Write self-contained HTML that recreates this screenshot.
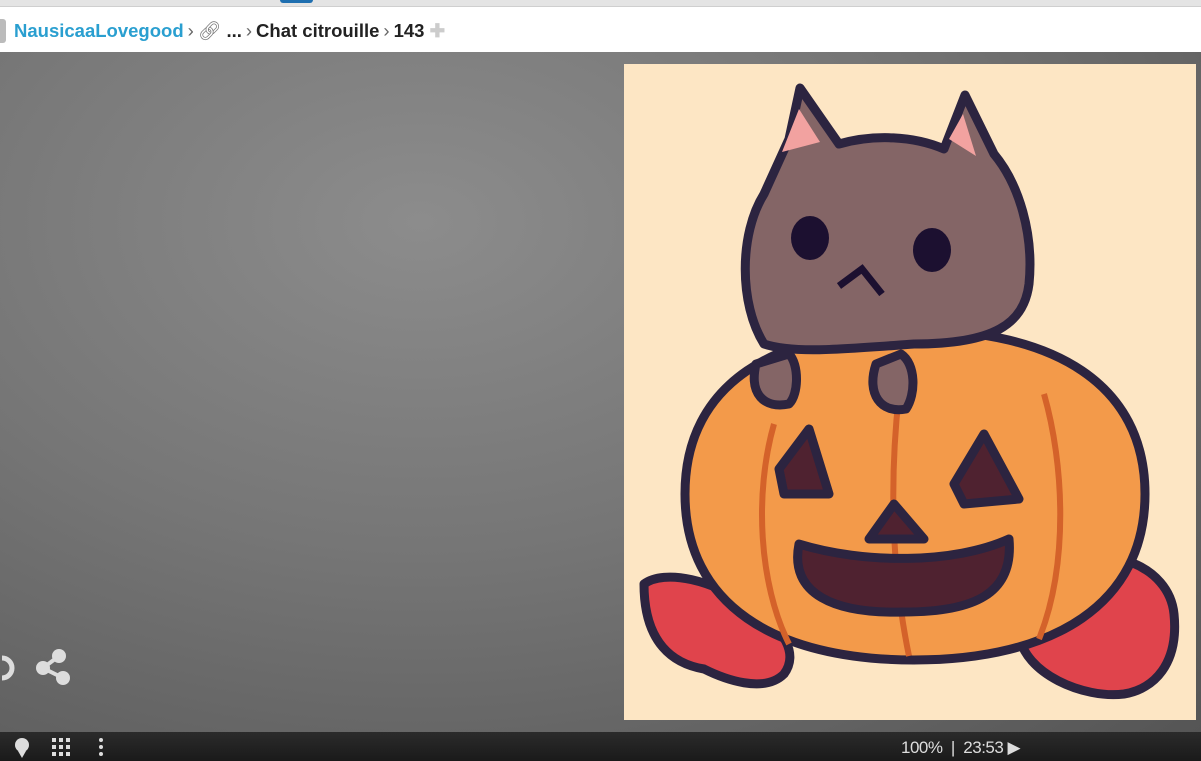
<!DOCTYPE html>
<html><head><meta charset="utf-8"><style>
body{margin:0;width:1201px;height:761px;overflow:hidden;font-family:"Liberation Sans",sans-serif;position:relative;background:#666}
#top{position:absolute;left:0;top:0;width:1201px;height:6px;background:#e4e4e4;border-bottom:1px solid #cfcfcf}
#tab{position:absolute;left:280px;top:0;width:33px;height:3px;background:#1f6fb0;border-radius:0 0 3px 3px}
#bar{position:absolute;left:0;top:7px;width:1201px;height:45px;background:#fff}
#crumb{position:absolute;left:14px;top:20px;font-size:18.5px;font-weight:bold;color:#222;white-space:nowrap}
#crumb .u{color:#2a9fd0}
#crumb .s{color:#666;font-weight:normal;margin:0 4px}
#main{position:absolute;left:0;top:52px;width:1201px;height:680px;background:radial-gradient(ellipse at 35% 25%,#8c8c8c 0%,#767676 45%,#555 100%)}
#img{position:absolute;left:624px;top:64px;width:572px;height:656px;background:#fde6c4}
#bot{position:absolute;left:0;top:732px;width:1201px;height:29px;background:linear-gradient(#2b2b2b,#1a1a1a)}
#stat{position:absolute;left:901px;top:738px;color:#ddd;font-size:17px;letter-spacing:-0.5px}
</style></head><body>
<div id="top"><div id="tab"></div></div>
<div id="bar"></div>
<div style="position:absolute;left:0;top:19px;width:6px;height:24px;background:#bbb;border-radius:0 3px 3px 0"></div>
<div id="crumb"><span class="u">NausicaaLovegood</span><span class="s">›</span><span style="color:#777;font-weight:normal">🔗︎</span> ...<span class="s">›</span>Chat citrouille<span class="s">›</span>143 <span style="color:#ccc">✚</span></div>
<div id="main"></div>
<svg style="position:absolute;left:0;top:648px" width="80" height="40">
<path d="M2 10 A9 9 0 1 1 2 30" fill="none" stroke="#ddd" stroke-width="5"/>
<circle cx="59" cy="8" r="7" fill="#ddd"/><circle cx="43" cy="20" r="7" fill="#ddd"/><circle cx="63" cy="30" r="7" fill="#ddd"/>
<path d="M59 8 L43 20 L63 30" stroke="#ddd" stroke-width="4" fill="none"/>
</svg>
<div id="img">
<svg width="572" height="656" viewBox="0 0 572 656">
<g stroke="#2c2440" stroke-width="9" stroke-linejoin="round">
<path d="M20 520 C40 505 90 515 130 545 C160 565 175 590 160 610 C140 630 100 615 80 605 C50 600 20 580 20 520Z" fill="#e0444c"/>
<path d="M440 500 C480 480 545 500 550 550 C555 600 530 625 500 630 C460 635 400 610 395 570 C395 540 410 515 440 500Z" fill="#e0444c"/>
<path d="M290 266 C150 266 61 320 61 430 C61 540 150 596 290 596 C430 596 521 540 521 430 C521 320 430 266 290 266Z" fill="#f39a4a"/>
</g>
<path d="M150 360 C130 430 135 520 165 580 M275 330 C265 420 268 510 285 592 M420 330 C440 400 445 500 415 575" stroke="#d4622a" stroke-width="6" fill="none"/>
<g stroke="#2c2440" stroke-width="9" stroke-linejoin="round">
<path d="M140 280 C115 240 115 170 140 130 L165 75 L176 24 L215 80 C250 70 290 72 320 85 L341 31 L370 90 C395 120 410 170 405 220 C400 260 370 280 290 280 C220 285 170 290 140 280Z" fill="#846566"/>
<path d="M132 300 C125 330 140 345 165 340 C175 330 175 300 165 290Z M252 300 C242 330 257 350 282 345 C292 330 292 300 277 290Z" fill="#846566"/>
<path d="M155 405 L185 365 L205 430 L160 430Z M330 420 L360 370 L395 435 L340 440Z" fill="#4f2230"/>
<path d="M245 475 L270 440 L300 475Z" fill="#4f2230"/>
<path d="M175 480 C165 530 210 550 280 548 C350 548 390 530 385 475 C330 500 240 500 175 480Z" fill="#4f2230"/>
</g>
<path d="M158 88 L175 45 L196 78Z M325 75 L339 50 L352 92Z" fill="#f2a2a0"/>
<ellipse cx="186" cy="174" rx="19" ry="22" fill="#1c1030"/>
<ellipse cx="308" cy="186" rx="19" ry="22" fill="#1c1030"/>
<path d="M215 222 L238 205 L258 230" stroke="#1c1030" stroke-width="7" fill="none"/>
</svg>
</div>
<div id="bot"></div>
<svg style="position:absolute;left:10px;top:736px" width="100" height="22">
<circle cx="12" cy="9" r="7" fill="#ddd"/><path d="M8 15 L12 22 L16 15Z" fill="#ddd"/>
<g fill="#ddd"><rect x="42" y="2" width="4" height="4"/><rect x="49" y="2" width="4" height="4"/><rect x="56" y="2" width="4" height="4"/><rect x="42" y="9" width="4" height="4"/><rect x="49" y="9" width="4" height="4"/><rect x="56" y="9" width="4" height="4"/><rect x="42" y="16" width="4" height="4"/><rect x="49" y="16" width="4" height="4"/><rect x="56" y="16" width="4" height="4"/>
<circle cx="91" cy="4" r="2"/><circle cx="91" cy="11" r="2"/><circle cx="91" cy="18" r="2"/></g>
</svg>
<div id="stat">100% &nbsp;| &nbsp;23:53 ▶</div>
</body></html>
